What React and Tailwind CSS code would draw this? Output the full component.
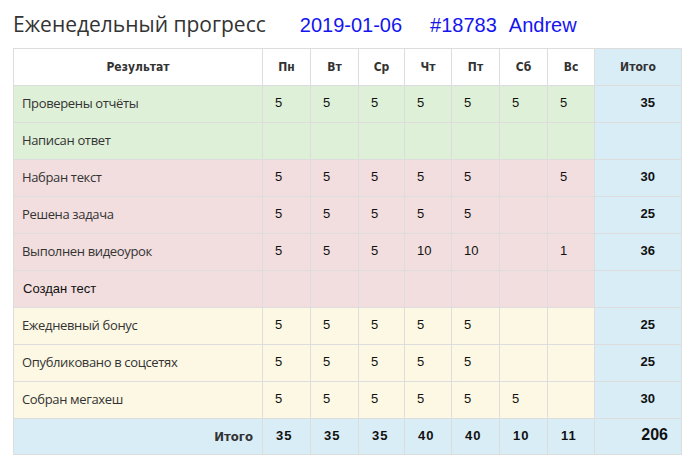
import React from "react";

const rows = [
  { label: "Проверены отчёты", tone: "bg-[#dff0d8]", days: ["5", "5", "5", "5", "5", "5", "5"], total: "35" },
  { label: "Написан ответ", tone: "bg-[#dff0d8]", days: ["", "", "", "", "", "", ""], total: "" },
  { label: "Набран текст", tone: "bg-[#f2dede]", days: ["5", "5", "5", "5", "5", "", "5"], total: "30" },
  { label: "Решена задача", tone: "bg-[#f2dede]", days: ["5", "5", "5", "5", "5", "", ""], total: "25" },
  { label: "Выполнен видеоурок", tone: "bg-[#f2dede]", days: ["5", "5", "5", "10", "10", "", "1"], total: "36" },
  { label: "Создан тест", tone: "bg-[#f2dede]", days: ["", "", "", "", "", "", ""], total: "", plain: true },
  { label: "Ежедневный бонус", tone: "bg-[#fcf8e3]", days: ["5", "5", "5", "5", "5", "", ""], total: "25" },
  { label: "Опубликовано в соцсетях", tone: "bg-[#fcf8e3]", days: ["5", "5", "5", "5", "5", "", ""], total: "25" },
  { label: "Собран мегахеш", tone: "bg-[#fcf8e3]", days: ["5", "5", "5", "5", "5", "5", ""], total: "30" },
];

const dayNames = ["Пн", "Вт", "Ср", "Чт", "Пт", "Сб", "Вс"];
const footer = ["35", "35", "35", "40", "40", "10", "11"];
const widths = [249, 48, 48, 46, 47, 48, 48, 47, 87];

const headFont = { fontFamily: "'DejaVu Sans', Roboto, sans-serif", fontStretch: "condensed" };

const App = () => {
  return (
    <div className="w-[690px] h-[465px] bg-white px-[13px] overflow-hidden">
      <div className="flex items-baseline h-[48px] pt-[9px]">
        <span className="text-[21px] leading-[30px] text-[#333] font-['Open_Sans',sans-serif]">
          Еженедельный прогресс
        </span>
        <span className="ml-[34px] text-[20px] text-[#1515f0] font-['Liberation_Sans',Arial,sans-serif]">
          2019-01-06
        </span>
        <span className="ml-[28px] text-[20px] text-[#1515f0] font-['Liberation_Sans',Arial,sans-serif]">
          #18783
        </span>
        <span className="ml-[12px] text-[20px] text-[#1515f0] font-['Liberation_Sans',Arial,sans-serif]">
          Andrew
        </span>
      </div>
      <table className="table-fixed border-collapse w-[668px] border border-[#ddd]">
        <colgroup>
          {widths.map((w, i) => (
            <col key={i} style={{ width: w }} />
          ))}
        </colgroup>
        <thead>
          <tr className="h-[37px]">
            <th className="border border-[#ddd] text-center text-[12px] font-bold text-[#333]" style={headFont}>
              Результат
            </th>
            {dayNames.map((d) => (
              <th key={d} className="border border-[#ddd] text-center text-[12px] font-bold text-[#333]" style={headFont}>
                {d}
              </th>
            ))}
            <th className="border border-[#ddd] bg-[#d9edf7] text-center text-[12px] font-bold text-[#333]" style={headFont}>
              Итого
            </th>
          </tr>
        </thead>
        <tbody>
          {rows.map((r) => (
            <tr key={r.label} className={`h-[37px] ${r.tone}`}>
              <td
                className={
                  r.plain
                    ? "border border-[#ddd] pl-[9px] text-[13px] text-[#111] font-['Liberation_Sans',Arial,sans-serif]"
                    : "border border-[#ddd] pl-[8px] text-[13px] tracking-[-0.35px] text-[#333] font-['Open_Sans',sans-serif]"
                }
              >
                {r.label}
              </td>
              {r.days.map((v, i) => (
                <td
                  key={i}
                  className="border border-[#ddd] pl-[12px] pb-[2px] text-[13px] text-[#111] font-['Liberation_Sans',Arial,sans-serif]"
                >
                  {v}
                </td>
              ))}
              <td className="border border-[#ddd] bg-[#d9edf7] pr-[26px] pb-[2px] text-right text-[13px] font-bold text-[#111] font-['Liberation_Sans',Arial,sans-serif]">
                {r.total}
              </td>
            </tr>
          ))}
          <tr className="h-[36px] bg-[#d9edf7]">
            <td className="border border-[#ddd] pr-[9px] text-right text-[13px] font-bold text-[#333]" style={headFont}>
              Итого
            </td>
            {footer.map((v, i) => (
              <td
                key={i}
                className="border border-[#ddd] pl-[13px] pb-[2px] text-[13px] font-bold tracking-[1px] text-[#111] font-['Liberation_Sans',Arial,sans-serif]"
              >
                {v}
              </td>
            ))}
            <td className="border border-[#ddd] pr-[13px] pb-[4px] text-right text-[16px] font-bold text-[#111] font-['Liberation_Sans',Arial,sans-serif]">
              206
            </td>
          </tr>
        </tbody>
      </table>
    </div>
  );
};

export default App;
